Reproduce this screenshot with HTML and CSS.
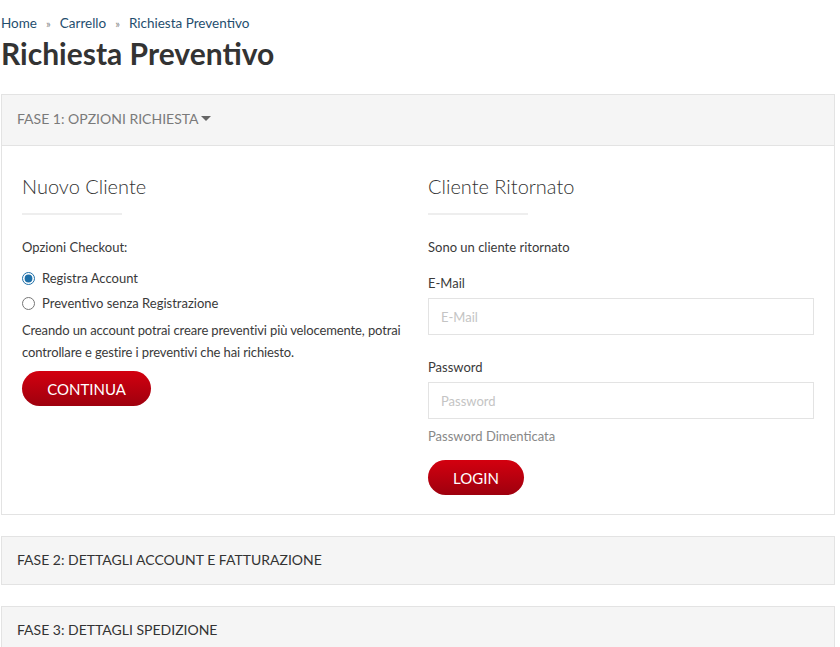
FILE: index.html
```html
<!DOCTYPE html>
<html lang="it">
<head>
    <meta charset="UTF-8">
    <meta name="viewport" content="width=device-width, initial-scale=1.0">
    <title>Richiesta Preventivo</title>
    <link rel="stylesheet" href="styles.css">
</head>
<body>
    <div class="container">
        <ul class="breadcrumb">
            <li><a href="#">Home</a></li>
            <li><a href="#">Carrello</a></li>
            <li><a href="#">Richiesta Preventivo</a></li>
        </ul>
        <h1 class="page-title">Richiesta Preventivo</h1>

        <div class="panel">
            <div class="panel-heading panel-heading-open">
                <a href="#" class="panel-title">FASE 1: OPZIONI RICHIESTA <span class="caret"></span></a>
            </div>
            <div class="panel-body">
                <div class="col">
                    <h2 class="col-title">Nuovo Cliente</h2>
                    <p class="text">Opzioni Checkout:</p>
                    <div class="radio-list">
                        <label class="radio"><input type="radio" name="account" checked> Registra Account</label>
                        <label class="radio"><input type="radio" name="account"> Preventivo senza Registrazione</label>
                    </div>
                    <p class="text text-block">Creando un account potrai creare preventivi più velocemente, potrai controllare e gestire i preventivi che hai richiesto.</p>
                    <button class="btn btn-continue">CONTINUA</button>
                </div>
                <div class="col">
                    <h2 class="col-title">Cliente Ritornato</h2>
                    <p class="text">Sono un cliente ritornato</p>
                    <form class="login-form">
                        <label class="field-label" for="email">E-Mail</label>
                        <input class="field" type="text" id="email" placeholder="E-Mail">
                        <label class="field-label field-label-second" for="password">Password</label>
                        <input class="field" type="password" id="password" placeholder="Password">
                        <a href="#" class="forgot">Password Dimenticata</a>
                        <button type="submit" class="btn btn-login">LOGIN</button>
                    </form>
                </div>
            </div>
        </div>

        <div class="panel">
            <div class="panel-heading">
                <span class="panel-title panel-title-dark">FASE 2: DETTAGLI ACCOUNT E FATTURAZIONE</span>
            </div>
        </div>

        <div class="panel">
            <div class="panel-heading">
                <span class="panel-title panel-title-dark">FASE 3: DETTAGLI SPEDIZIONE</span>
            </div>
        </div>
    </div>
</body>
</html>
```
FILE: styles.css
```css
* {
    margin: 0;
    padding: 0;
    box-sizing: border-box;
}
body {
    font-family: Lato, "Open Sans", sans-serif;
    background: #fff;
    color: #333;
    font-size: 13px;
}
a {
    text-decoration: none;
}
.container {
    width: 835px;
    padding: 13px 0 0 1px;
}
.breadcrumb {
    list-style: none;
    display: flex;
    font-size: 13.5px;
    line-height: 20px;
}
.breadcrumb a {
    color: #1f4e6e;
}
.breadcrumb li + li::before {
    content: "»";
    color: #888;
    font-size: 11px;
    padding: 0 9px;
}
.page-title {
    font-size: 30px;
    font-weight: 700;
    line-height: 36px;
    margin: 1px 0 23px 0;
    color: #333;
}
.panel {
    border: 1px solid #e3e3e3;
    margin-bottom: 21px;
    background: #fff;
}
.panel-heading {
    background: #f5f5f5;
    padding: 13px 15px 14px;
    line-height: 20px;
}
.panel-heading-open {
    padding: 14px 15px 16px;
    border-bottom: 1px solid #e3e3e3;
}
.panel-title {
    font-size: 14px;
    color: #7a7a7a;
}
.panel-title-dark {
    color: #333;
}
.caret {
    display: inline-block;
    width: 0;
    height: 0;
    border-left: 5px solid transparent;
    border-right: 5px solid transparent;
    border-top: 5px solid #666;
    vertical-align: 3px;
    margin-left: -1px;
}
.panel-body {
    display: grid;
    grid-template-columns: 1fr 1fr;
    gap: 20px;
    padding: 20px 20px 19px;
}
.col-title {
    font-size: 20px;
    font-weight: 300;
    line-height: 24px;
    margin: 8px 0 22px;
    color: #333;
}
.col-title::after {
    content: "";
    display: block;
    width: 100px;
    height: 2px;
    margin-top: 15px;
    background: #eee;
}
.text {
    line-height: 20px;
    color: #3a3a3a;
}
.radio-list {
    display: flex;
    flex-direction: column;
    gap: 5px;
    margin-top: 11px;
}
.radio {
    display: flex;
    align-items: center;
    gap: 7px;
    line-height: 20px;
    color: #3a3a3a;
}
.radio input {
    width: 13px;
    height: 13px;
    margin: 0;
    accent-color: #1e6fa8;
}
.text-block {
    line-height: 22px;
    margin-top: 6px;
    letter-spacing: -0.12px;
}
.btn {
    display: block;
    height: 35px;
    border: none;
    border-radius: 18px;
    background: linear-gradient(#d3000f, #9e000e);
    color: #fff;
    font-family: Lato, sans-serif;
    font-size: 15px;
    cursor: pointer;
}
.btn-continue {
    width: 129px;
    margin-top: 8px;
}
.btn-login {
    width: 96px;
    margin-top: 14px;
}
.login-form {
    display: flex;
    flex-direction: column;
    align-items: flex-start;
}
.field-label {
    line-height: 20px;
    margin-top: 16px;
    margin-bottom: 5px;
    color: #3a3a3a;
}
.field-label-second {
    margin-top: 22px;
}
.field {
    width: 100%;
    height: 37px;
    border: 1px solid #e3e3e3;
    padding: 0 12px;
    font-family: Lato, sans-serif;
    font-size: 13px;
    color: #333;
}
.field::placeholder {
    color: #c4c4c4;
}
.forgot {
    color: #888;
    line-height: 20px;
    margin-top: 7px;
}
```
